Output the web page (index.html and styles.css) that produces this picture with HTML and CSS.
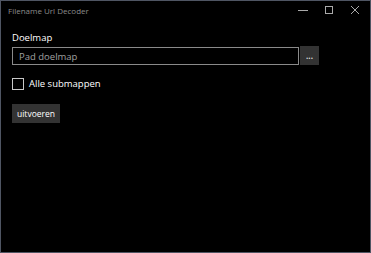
FILE: index.html
```html
<!DOCTYPE html>
<html lang="nl">
<head>
    <meta charset="UTF-8">
    <title>Filename Url Decoder</title>
    <link rel="stylesheet" href="styles.css">
</head>
<body>
    <div class="venster">
        <div class="titelbalk">
            <span class="titel">Filename Url Decoder</span>
            <div class="knoppen">
                <span class="knop">
                    <svg width="10" height="10" viewBox="0 0 10 10"><path d="M0 5.5h10" stroke="#aaa" stroke-width="1"/></svg>
                </span>
                <span class="knop">
                    <svg width="10" height="10" viewBox="0 0 10 10"><rect x="1.5" y="1.5" width="7" height="7" fill="none" stroke="#aaa" stroke-width="1"/></svg>
                </span>
                <span class="knop">
                    <svg width="10" height="10" viewBox="0 0 10 10"><path d="M1 1L9 9M9 1L1 9" stroke="#aaa" stroke-width="1"/></svg>
                </span>
            </div>
        </div>

        <div class="inhoud">
            <label class="label">Doelmap</label>
            <div class="pad-rij">
                <input class="pad-invoer" type="text" placeholder="Pad doelmap">
                <button class="bladeren">...</button>
            </div>

            <label class="vinkje">
                <span class="vakje"></span>
                <span>Alle submappen</span>
            </label>

            <button class="uitvoeren">uitvoeren</button>
        </div>
    </div>
</body>
</html>
```

FILE: styles.css
```css
body {
    margin: 0;
    background-color: #000;
    font-family: 'Open Sans', 'Noto Sans', sans-serif;
}
.venster {
    box-sizing: border-box;
    width: 371px;
    height: 253px;
    border: 1px solid #4f5563;
    background-color: #000;
}
.titelbalk {
    display: flex;
    justify-content: space-between;
    align-items: center;
    height: 18px;
    padding-left: 7px;
}
.titel {
    font-size: 8px;
    color: #8c8c8c;
}
.knoppen {
    display: flex;
    padding-right: 2px;
}
.knop {
    display: flex;
    justify-content: center;
    align-items: center;
    width: 26px;
    height: 18px;
}
.inhoud {
    display: flex;
    flex-direction: column;
    align-items: flex-start;
    padding: 12px 0 0 11px;
}
.label {
    font-size: 9.5px;
    color: #fff;
    margin-bottom: 3px;
}
.pad-rij {
    display: flex;
}
.pad-invoer {
    box-sizing: border-box;
    width: 287px;
    height: 18px;
    margin: 0;
    padding: 0 6px;
    border: 1px solid #8a8a8a;
    background-color: #000;
    color: #fff;
    font-family: inherit;
    font-size: 9.5px;
    outline: none;
}
.pad-invoer::placeholder {
    color: #a0a0a0;
}
.bladeren {
    box-sizing: border-box;
    width: 19px;
    height: 19px;
    margin: -1px 0 0 1px;
    padding: 0;
    border: none;
    background-color: #333;
    color: #ddd;
    font-family: inherit;
    font-size: 8px;
    font-weight: bold;
}
.vinkje {
    display: flex;
    align-items: center;
    gap: 5px;
    margin-top: 12px;
    font-size: 9.5px;
    color: #fff;
}
.vakje {
    box-sizing: border-box;
    width: 12px;
    height: 12px;
    border: 1px solid #c8c8c8;
}
.uitvoeren {
    box-sizing: border-box;
    margin-top: 14px;
    height: 19px;
    padding: 0 5px;
    border: none;
    background-color: #333;
    color: #fff;
    font-family: inherit;
    font-size: 8.5px;
}
```
